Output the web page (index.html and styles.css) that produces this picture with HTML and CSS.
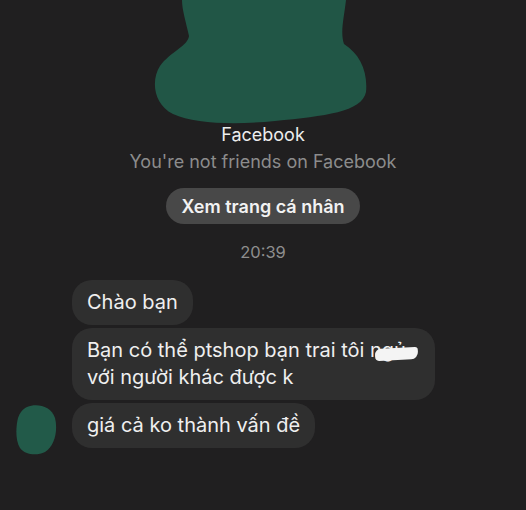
FILE: index.html
```html
<!DOCTYPE html>
<html lang="vi">
<head>
<meta charset="utf-8">
<link rel="stylesheet" href="styles.css">
</head>
<body>
<div class="screen">
  <header class="profile">
    <svg class="cover-blob" width="526" height="124" viewBox="0 0 526 124">
      <path d="M182,0 L346,0 C344,18 340,32 344,44 C360,54 368,72 366,92 C362,112 325,116 275,121 C235,125 195,124 173,114 C153,104 151,80 160,66 C170,52 188,46 189,36 C186,22 182,10 182,0 Z" fill="#215646"/>
    </svg>
    <div class="name">Facebook</div>
    <div class="note">You're not friends on Facebook</div>
    <button class="profile-btn">Xem trang cá nhân</button>
    <div class="time">20:39</div>
  </header>
  <section class="thread">
    <svg class="avatar" width="42" height="54" viewBox="0 0 42 52">
      <path d="M12,3 C22,-1 36,2 40,14 C43,26 40,42 30,48 C22,52 10,51 5,44 C0,36 1,22 3,14 C5,8 8,5 12,3 Z" fill="#225a49"/>
    </svg>
    <div class="bubbles">
      <div class="bubble">Chào bạn</div>
      <div class="bubble">Bạn có thể ptshop bạn trai tôi <span class="redact">ngủ</span><br>với người khác được k</div>
      <div class="bubble">giá cả ko thành vấn đề</div>
    </div>
  </section>
</div>
</body>
</html>
```

FILE: styles.css
```css
html, body {
  margin: 0;
  padding: 0;
  background: #201f20;
}
.screen {
  width: 526px;
  height: 510px;
  overflow: hidden;
  font-family: Inter, Roboto, "Noto Sans", sans-serif;
  color: #ececec;
}
.profile {
  display: flex;
  flex-direction: column;
  align-items: center;
}
.cover-blob {
  display: block;
}
.name {
  font-size: 18px;
  line-height: 22px;
  margin-top: 0;
  color: #ededed;
}
.note {
  font-size: 18px;
  line-height: 22px;
  margin-top: 5px;
  color: #8c8c8c;
}
.profile-btn {
  margin-top: 15px;
  height: 36px;
  padding: 0 15px;
  border: none;
  border-radius: 18px;
  background: #484848;
  color: #f2f2f2;
  font-family: Inter, Roboto, "Noto Sans", sans-serif;
  font-size: 18px;
  font-weight: 600;
}
.time {
  margin-top: 18px;
  font-size: 16.5px;
  line-height: 20px;
  color: #8e8e8e;
}
.thread {
  display: flex;
  align-items: flex-end;
  padding-left: 15px;
  margin-top: 18px;
  gap: 15px;
}
.avatar {
  display: block;
  margin-bottom: -9px;
}
.bubbles {
  display: flex;
  flex-direction: column;
  align-items: flex-start;
  gap: 3px;
}
.bubble {
  background: #2f2f2f;
  border-radius: 20px;
  padding: 9px 15px;
  font-size: 20px;
  line-height: 27px;
  color: #efefef;
}
.redact {
  position: relative;
  padding-right: 14px;
}
.redact::after {
  content: "";
  position: absolute;
  left: 5px;
  right: 2px;
  top: 10px;
  height: 12px;
  background: #f4f4f4;
  border-radius: 6px 3px 7px 4px;
  transform: rotate(-3deg);
}
```
